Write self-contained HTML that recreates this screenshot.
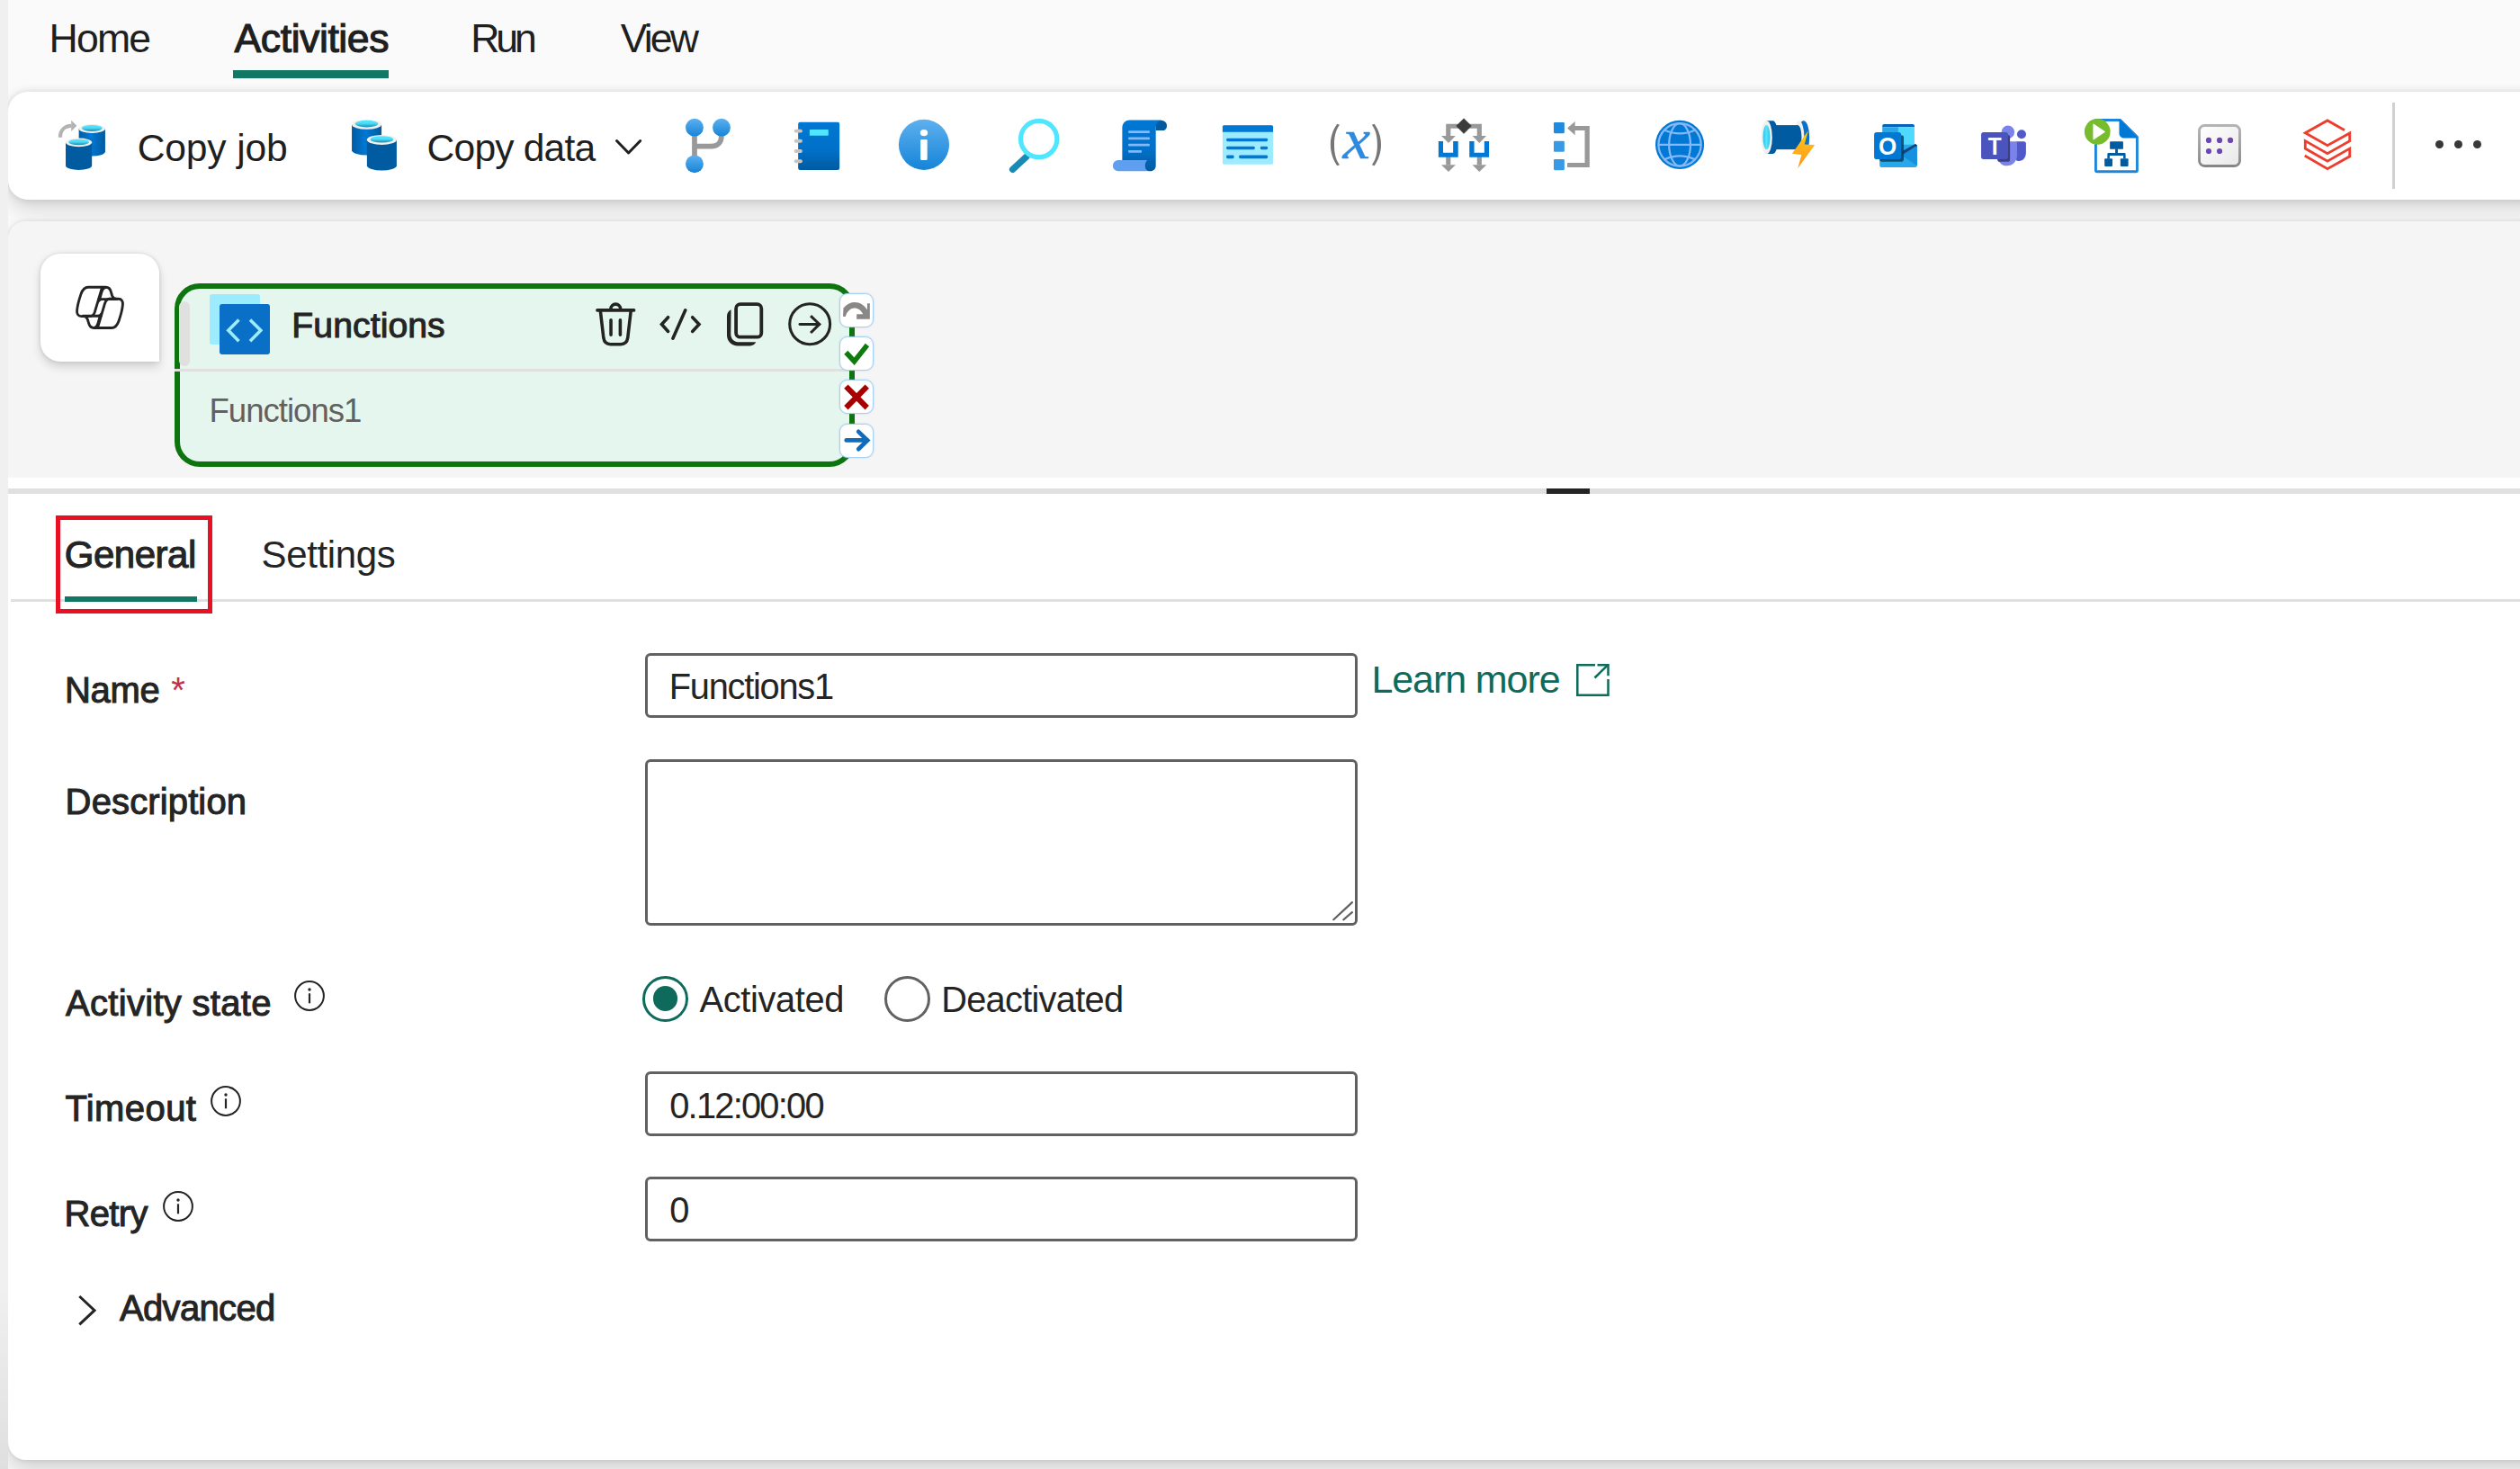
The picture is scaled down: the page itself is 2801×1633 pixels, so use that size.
<!DOCTYPE html>
<html lang="en">
<head>
<meta charset="utf-8">
<title>Functions activity - General</title>
<style>
html,body{margin:0;padding:0;}
body{width:2801px;height:1633px;overflow:hidden;background:#f0f0f0;font-family:"Liberation Sans",sans-serif;position:relative;}
.abs,.t,svg.i{position:absolute;}
.t{white-space:nowrap;}
#main{position:absolute;left:9px;top:0;width:2792px;height:1633px;background:#fafafa;overflow:hidden;}
#main > *{position:absolute;}
#toolbar{left:0;top:102px;width:2830px;height:120px;background:#fff;border-radius:22px;box-shadow:0 0 8px rgba(0,0,0,.13),0 11px 22px rgba(0,0,0,.14);}
#work{left:0;top:246px;width:2830px;height:1377px;background:#fff;border-radius:20px;box-shadow:0 0 5.5px rgba(0,0,0,.12),0 11px 22px rgba(0,0,0,.16);overflow:hidden;}
#canvas{position:absolute;left:0;top:0;width:100%;height:285px;background:#f5f5f5;}
.cb{width:38px;height:38px;box-sizing:border-box;border:1.5px solid #a6d1f3;border-radius:9px;background:#fff;box-shadow:0 0 2px rgba(120,180,235,.6);}
.inp{position:absolute;box-sizing:border-box;border:3px solid #616161;border-radius:6px;background:#fff;}
</style>
</head>
<body>

<div class="abs" id="leftshade" style="left:0;top:1430px;width:9px;height:203px;background:linear-gradient(to bottom,rgba(0,0,0,0),rgba(0,0,0,.07));"></div>
<div id="main">
  <div class="abs" style="left:250px;top:78px;width:173px;height:9px;background:#117865;"></div>
  <div id="toolbar"></div>
  <div id="work">
    <div id="canvas"></div>
    <div class="abs" style="left:0;top:297px;width:100%;height:6px;background:#e0e0e0;"></div>
    <div class="abs" style="left:1710px;top:297px;width:48px;height:6px;background:#242424;"></div>
    <div class="abs" style="left:3px;top:420px;width:100%;height:3px;background:#e0e0e0;"></div>
  </div>
</div>
<!-- toolbar divider + ellipsis -->
<div class="abs" style="left:2659px;top:114px;width:3px;height:96px;background:#d1d1d1;"></div>
<div class="abs" style="left:2706.8px;top:155.8px;width:9.2px;height:9.2px;border-radius:50%;background:#383838;"></div>
<div class="abs" style="left:2727.9px;top:155.8px;width:9.2px;height:9.2px;border-radius:50%;background:#383838;"></div>
<div class="abs" style="left:2748.9px;top:155.8px;width:9.2px;height:9.2px;border-radius:50%;background:#383838;"></div>
<!-- copilot button -->
<div class="abs" style="left:45px;top:282px;width:132px;height:120px;background:#fff;border-radius:22px 22px 0 22px;box-shadow:0 0 5.5px rgba(0,0,0,.12),0 5.5px 11px rgba(0,0,0,.14);"></div>
<!-- node -->
<div class="abs" style="left:194px;top:315px;width:756px;height:204px;box-sizing:border-box;border:6px solid #0e740f;border-radius:28px;background:#e5f6ee;"></div>
<div class="abs" style="left:194px;top:410px;width:750px;height:3px;background:#e0e0e0;"></div>
<div class="abs" style="left:199px;top:335px;width:12px;height:72px;border-radius:6px;background:#e0e0e0;"></div>
<!-- panel tab underline + red box -->
<div class="abs" style="left:72px;top:663px;width:147px;height:6px;background:#117865;"></div>
<div class="abs" style="left:62px;top:573px;width:174px;height:109px;box-sizing:border-box;border:5px solid #e81123;"></div>
<!-- inputs -->
<div class="inp" style="left:717px;top:726px;width:792px;height:72px;"></div>
<div class="inp" style="left:717px;top:843.5px;width:792px;height:185px;"></div>
<div class="inp" style="left:717px;top:1191px;width:792px;height:72px;"></div>
<div class="inp" style="left:717px;top:1308.4px;width:792px;height:72px;"></div>

<div class="t" style="left:54.53px;top:20.75px;font-size:44.6px;line-height:44.6px;font-weight:400;color:#1f1f1f;letter-spacing:-1.789px;">Home</div>
<div class="t" style="left:260.58px;top:20.75px;font-size:44.6px;line-height:44.6px;font-weight:400;color:#1f1f1f;letter-spacing:-0.451px;-webkit-text-stroke:1.16px #1f1f1f;">Activities</div>
<div class="t" style="left:523.23px;top:20.75px;font-size:44.6px;line-height:44.6px;font-weight:400;color:#1f1f1f;letter-spacing:-4.161px;">Run</div>
<div class="t" style="left:689.80px;top:20.75px;font-size:44.6px;line-height:44.6px;font-weight:400;color:#1f1f1f;letter-spacing:-2.897px;">View</div>
<div class="t" style="left:152.67px;top:142.64px;font-size:42.6px;line-height:42.6px;font-weight:400;color:#1f1f1f;letter-spacing:-0.150px;">Copy job</div>
<div class="t" style="left:474.57px;top:142.64px;font-size:42.6px;line-height:42.6px;font-weight:400;color:#1f1f1f;letter-spacing:-0.816px;">Copy data</div>
<div class="t" style="left:324.37px;top:341.82px;font-size:39.2px;line-height:39.2px;font-weight:400;color:#242424;letter-spacing:0.055px;-webkit-text-stroke:1.02px #242424;">Functions</div>
<div class="t" style="left:232.47px;top:438.82px;font-size:36.6px;line-height:36.6px;font-weight:400;color:#616161;letter-spacing:-1.002px;">Functions1</div>
<div class="t" style="left:71.74px;top:595.85px;font-size:42.0px;line-height:42.0px;font-weight:400;color:#242424;letter-spacing:-0.483px;-webkit-text-stroke:1.09px #242424;">General</div>
<div class="t" style="left:290.51px;top:595.85px;font-size:42.0px;line-height:42.0px;font-weight:400;color:#242424;letter-spacing:-0.343px;">Settings</div>
<div class="t" style="left:72.02px;top:747.24px;font-size:40.0px;line-height:40.0px;font-weight:400;color:#242424;letter-spacing:-0.364px;-webkit-text-stroke:1.04px #242424;">Name</div>
<div class="t" style="left:190.20px;top:747.24px;font-size:40.0px;line-height:40.0px;font-weight:400;color:#c4314b;letter-spacing:0.000px;">*</div>
<div class="t" style="left:72.62px;top:870.64px;font-size:40.0px;line-height:40.0px;font-weight:400;color:#242424;letter-spacing:0.133px;-webkit-text-stroke:1.04px #242424;">Description</div>
<div class="t" style="left:73.02px;top:1095.14px;font-size:40.0px;line-height:40.0px;font-weight:400;color:#242424;letter-spacing:0.300px;-webkit-text-stroke:1.04px #242424;">Activity state</div>
<div class="t" style="left:72.42px;top:1212.04px;font-size:40.0px;line-height:40.0px;font-weight:400;color:#242424;letter-spacing:0.428px;-webkit-text-stroke:1.04px #242424;">Timeout</div>
<div class="t" style="left:71.52px;top:1328.84px;font-size:40.0px;line-height:40.0px;font-weight:400;color:#242424;letter-spacing:-0.652px;-webkit-text-stroke:1.04px #242424;">Retry</div>
<div class="t" style="left:133.02px;top:1434.34px;font-size:40.0px;line-height:40.0px;font-weight:400;color:#242424;letter-spacing:-0.672px;-webkit-text-stroke:1.04px #242424;">Advanced</div>
<div class="t" style="left:743.82px;top:744.31px;font-size:39.8px;line-height:39.8px;font-weight:400;color:#242424;letter-spacing:-1.274px;">Functions1</div>
<div class="t" style="left:1524.46px;top:733.60px;font-size:43.0px;line-height:43.0px;font-weight:400;color:#0e6b5b;letter-spacing:-1.087px;">Learn more</div>
<div class="t" style="left:777.60px;top:1091.91px;font-size:39.8px;line-height:39.8px;font-weight:400;color:#242424;letter-spacing:-0.372px;">Activated</div>
<div class="t" style="left:1046.22px;top:1091.91px;font-size:39.8px;line-height:39.8px;font-weight:400;color:#242424;letter-spacing:-0.736px;">Deactivated</div>
<div class="t" style="left:744.21px;top:1209.61px;font-size:39.8px;line-height:39.8px;font-weight:400;color:#242424;letter-spacing:-1.754px;">0.12:00:00</div>
<div class="t" style="left:744.21px;top:1326.31px;font-size:39.8px;line-height:39.8px;font-weight:400;color:#242424;letter-spacing:0.000px;">0</div>
<!-- copilot icon -->
<svg class="i" style="left:70px;top:305px" width="80" height="75" viewBox="0 0 1567 1469" fill="none" stroke="#242424" stroke-width="56" stroke-linecap="round" stroke-linejoin="round">
  <g>
    <path d="M590 912H400C330 912 300 860 305 790C312 700 360 520 392 428C424 338 472 280 548 280H930C1000 280 1030 320 1045 380L1070 465C1085 512 1120 536 1168 538"/>
    <path d="M852 284L692 820C672 880 642 912 590 912"/>
    <path d="M926 284C880 290 858 330 845 375L800 532"/>
    <path d="M778 540H1170"/>
    <path d="M785 560L852 566C815 570 796 590 780 624Z" fill="#242424" stroke="none"/>
  </g>
  <g transform="rotate(180 803 723)">
    <path d="M590 912H400C330 912 300 860 305 790C312 700 360 520 392 428C424 338 472 280 548 280H930C1000 280 1030 320 1045 380L1070 465C1085 512 1120 536 1168 538"/>
    <path d="M852 284L692 820C672 880 642 912 590 912"/>
    <path d="M926 284C880 290 858 330 845 375L800 532"/>
    <path d="M778 540H1170"/>
    <path d="M785 560L852 566C815 570 796 590 780 624Z" fill="#242424" stroke="none"/>
  </g>
</svg>

<!-- node: function icon -->
<div class="abs" style="left:233px;top:327px;width:56px;height:56px;border-radius:3px;background:#9cebff;"></div>
<div class="abs" style="left:244px;top:338px;width:56px;height:56px;border-radius:3px;background:#0a6fc6;"></div>
<svg class="i" style="left:244px;top:338px" width="56" height="56" viewBox="0 0 56 56" fill="none" stroke="#9cebff" stroke-width="3.6" stroke-linecap="butt" stroke-linejoin="miter">
  <path d="M21.5 17.5L9.8 29.3L21.5 41.2"/><path d="M34 17.5L45.8 29.3L34 41.2"/>
</svg>
<!-- node: trash + code -->
<svg class="i" style="left:650px;top:325px" width="150" height="70" viewBox="0 0 2520 1176" fill="none" stroke="#242424" stroke-width="60" stroke-linecap="round" stroke-linejoin="round">
  <path d="M234 334H918"/>
  <path d="M485 312A91 91 0 0 1 667 312"/>
  <path d="M292 350L350 850C362 930 400 970 480 970H672C752 970 790 930 802 850L860 350"/>
  <path d="M488 518V795M662 518V795"/>
  <g stroke-linejoin="miter">
  <path d="M1556 466L1436 596L1556 730"/>
  <path d="M1878 332L1645 860"/>
  <path d="M2010 466L2134 596L2010 730"/>
  </g>
</svg>
<!-- node: copy + arrow circle -->
<svg class="i" style="left:795px;top:325px" width="150" height="70" viewBox="0 0 2520 1176" fill="none" stroke="#242424" stroke-width="64" stroke-linecap="butt" stroke-linejoin="miter">
  <rect x="388" y="221" width="474" height="614" rx="80" ry="80"/>
  <path stroke="none" fill="#242424" d="M295 322C245 345 218 390 218 445V800C218 915 305 1000 420 1000H650C700 1000 740 970 760 930H450C355 930 290 870 290 775Z"/>
  <circle cx="1767" cy="592" r="377" stroke-width="52"/>
  <path d="M1580 595H1945" stroke-width="50" stroke-linecap="round"/>
  <path d="M1782 438L1945 595L1782 757" stroke-width="50"/>
</svg>

<!-- node connectors -->
<div class="abs cb" style="left:933px;top:326.4px;"></div>
<div class="abs cb" style="left:933px;top:374.3px;"></div>
<div class="abs cb" style="left:933px;top:422.4px;"></div>
<div class="abs cb" style="left:933px;top:470.5px;"></div>
<svg class="i" style="left:920px;top:315px" width="70" height="105" viewBox="0 0 979 1469" fill="none">
  <path fill="#8a8886" d="M238 515L244 385C300 322 360 295 420 295C500 295 570 340 615 412L615 310L655 310L655 555L450 555L450 480L548 480C522 420 472 385 415 385C360 385 300 430 277 518Z"/>
  <path stroke="#0f7b0f" stroke-width="78" d="M284 1074L413 1213L615 958"/>
</svg>
<svg class="i" style="left:920px;top:415px" width="70" height="105" viewBox="0 0 979 1469" fill="none">
  <path stroke="#a80000" stroke-width="86" d="M285 205L612 535M612 205L285 535"/>
  <path stroke="#0f6cbd" stroke-width="66" stroke-linecap="round" d="M290 1042H610"/>
  <path stroke="#0f6cbd" stroke-width="66" stroke-linecap="round" stroke-linejoin="miter" d="M478 907L618 1042L478 1178"/>
</svg>

<!-- toolbar: copy job icon -->
<svg class="i" style="left:55px;top:125px" width="80" height="70" viewBox="0 0 1679 1469" fill="none">
  <defs>
    <linearGradient id="cylg" x1="0" x2="1" y1="0" y2="0"><stop offset="0" stop-color="#005ba1"/><stop offset=".45" stop-color="#0078d4"/><stop offset="1" stop-color="#005ba1"/></linearGradient>
    <linearGradient id="cylw" x1="0" x2="0" y1="0" y2="1"><stop offset="0" stop-color="#50e6ff"/><stop offset=".45" stop-color="#4ddcf7"/><stop offset="1" stop-color="#1b86b0"/></linearGradient>
  </defs>
  <path d="M250 582C250 420 350 315 515 312" stroke="#b3b3b3" stroke-width="88"/>
  <path d="M508 185L638 312L508 440Z" fill="#b3b3b3"/>
  <path d="M685 378V920A308 105 0 0 0 1300 920V378Z" fill="url(#cylg)"/>
  <ellipse cx="992" cy="378" rx="308" ry="105" fill="#f2f0ee"/>
  <ellipse cx="992" cy="368" rx="240" ry="72" fill="url(#cylw)"/>
  <path d="M378 700V1240A306 104 0 0 0 990 1240V700Z" fill="#005ba1"/>
  <ellipse cx="684" cy="700" rx="306" ry="102" fill="#f2f0ee"/>
  <ellipse cx="684" cy="692" rx="240" ry="70" fill="url(#cylw)"/>
</svg>

<!-- toolbar: copy data icon + chevron -->
<svg class="i" style="left:380px;top:125px" width="80" height="70" viewBox="0 0 1679 1469" fill="none">
  <path d="M232 278V885A347 118 0 0 0 925 885V278Z" fill="url(#cylg)"/>
  <ellipse cx="578" cy="278" rx="347" ry="118" fill="#f2f0ee"/>
  <ellipse cx="578" cy="264" rx="270" ry="80" fill="url(#cylw)"/>
  <path d="M585 640V1245A347 116 0 0 0 1278 1245V640Z" fill="#005ba1"/>
  <ellipse cx="931" cy="640" rx="347" ry="115" fill="#f2f0ee"/>
  <ellipse cx="931" cy="627" rx="268" ry="78" fill="url(#cylw)"/>
</svg>
<svg class="i" style="left:680px;top:150px" width="38" height="26" viewBox="0 0 38 26" fill="none" stroke="#1f1f1f" stroke-width="3" stroke-linecap="round" stroke-linejoin="round">
  <path d="M5.5 6.5L18.6 20L31.7 6.5"/>
</svg>

<!-- toolbar: branch + notebook -->
<svg class="i" style="left:750px;top:125px" width="200" height="75" viewBox="0 0 2520 945" fill="none">
  <defs>
    <linearGradient id="bcg" x1="0" x2="0" y1="0" y2="1"><stop offset="0" stop-color="#5eb0ef"/><stop offset="1" stop-color="#1584d8"/></linearGradient>
    <linearGradient id="nbg" x1="0" x2="0" y1="0" y2="1"><stop offset="0" stop-color="#0078d4"/><stop offset=".6" stop-color="#0070c8"/><stop offset="1" stop-color="#005ba1"/></linearGradient>
  </defs>
  <path d="M277 320V620M655 320C655 420 600 475 510 475H277" stroke="#999" stroke-width="72"/>
  <circle cx="277" cy="210" r="125" fill="url(#bcg)"/>
  <circle cx="655" cy="210" r="125" fill="url(#bcg)"/>
  <circle cx="277" cy="722" r="125" fill="url(#bcg)"/>
  <rect x="1728" y="135" width="580" height="670" rx="28" fill="url(#nbg)"/>
  <rect x="1888" y="238" width="264" height="88" rx="12" fill="#50e6ff"/>
  <g fill="#c8c6c4"><rect x="1672" y="235" width="116" height="50" rx="25"/><rect x="1672" y="375" width="116" height="50" rx="25"/><rect x="1672" y="517" width="116" height="50" rx="25"/><rect x="1672" y="658" width="116" height="50" rx="25"/></g>
</svg>

<!-- toolbar: info + search -->
<svg class="i" style="left:990px;top:125px" width="200" height="75" viewBox="0 0 2520 945" fill="none">
  <circle cx="466" cy="452" r="354" fill="url(#bcg)"/>
  <ellipse cx="466" cy="285" rx="53" ry="47" fill="#fff"/>
  <rect x="418" y="378" width="95" height="290" rx="16" fill="#fff"/>
  <path d="M1905 615L1708 798" stroke="#198ab3" stroke-width="92" stroke-linecap="round"/>
  <circle cx="2075" cy="372" r="254" stroke="#50e6ff" stroke-width="66" fill="#fff"/>
</svg>

<!-- toolbar: script + list -->
<svg class="i" style="left:1220px;top:125px" width="200" height="75" viewBox="0 0 2520 945" fill="none">
  <path d="M345 700V215C345 150 395 108 450 108H900L815 200V745C815 790 780 822 735 822C690 822 640 790 640 745V700Z" fill="url(#nbg)"/>
  <path d="M815 252V195C815 150 850 112 895 112C940 112 970 145 970 185C970 225 945 252 915 252Z" fill="#005ba1"/>
  <path d="M290 668H695C675 690 665 715 665 745C665 785 685 810 705 822H290A77 77 0 0 1 290 668Z" fill="#5ea0ef"/>
  <g fill="#83b9f9"><rect x="430" y="254" width="300" height="36" rx="10"/><rect x="430" y="345" width="300" height="36" rx="10"/><rect x="430" y="437" width="300" height="36" rx="10"/><rect x="430" y="528" width="188" height="36" rx="10"/></g>
  <rect x="1750" y="178" width="708" height="550" rx="22" fill="#9cebff"/>
  <path d="M1750 275V200A22 22 0 0 1 1772 178H2436A22 22 0 0 1 2458 200V275Z" fill="#0078d4"/>
  <g fill="#0078d4"><rect x="1803" y="362" width="580" height="45" rx="18"/><rect x="1803" y="475" width="400" height="45" rx="18"/><rect x="2278" y="475" width="105" height="45" rx="18"/><rect x="1803" y="600" width="107" height="45" rx="18"/><rect x="1980" y="600" width="403" height="45" rx="18"/></g>
</svg>

<!-- toolbar: variable (x) + if condition -->
<svg class="i" style="left:1460px;top:125px" width="200" height="75" viewBox="0 0 2520 945" fill="none">
  <defs><linearGradient id="xg" x1="0" x2="0" y1="0" y2="1"><stop offset="0" stop-color="#5ea0ef"/><stop offset="1" stop-color="#0078d4"/></linearGradient></defs>
  <path d="M330 162L365 172C300 260 290 360 290 452C290 545 300 650 365 735L330 745C270 660 238 560 238 452C238 345 270 250 330 162Z" fill="#767676"/>
  <path d="M330 162L365 172C300 260 290 360 290 452C290 545 300 650 365 735L330 745C270 660 238 560 238 452C238 345 270 250 330 162Z" fill="#767676" transform="translate(1183 0) scale(-1 1)"/>
  <text transform="translate(409 645) scale(1.08 1)" font-family="'Liberation Serif',serif" font-style="italic" font-size="805" fill="#2e8ae0" stroke="#2e8ae0" stroke-width="5">x</text>
  <g fill="#999">
    <path d="M1855 160H2355V330H2290V225H1920V330H1855Z"/>
    <path d="M1790 328H1990L1890 428ZM2225 328H2420L2322 428Z"/>
    <rect x="1855" y="620" width="65" height="116"/><rect x="2290" y="620" width="65" height="116"/>
    <path d="M1790 733H1990L1890 833ZM2225 733H2422L2322 833Z"/>
  </g>
  <path d="M2105 85L2210 190L2105 295L2000 190Z" fill="#3b3b3b" stroke="#3b3b3b" stroke-width="8" stroke-linejoin="round"/>
  <path d="M1750 403H1815V565H1955V403H2025V628H1750ZM2183 403H2250V565H2392V403H2458V628H2183Z" fill="#0078d4"/>
</svg>

<!-- toolbar: foreach + web globe -->
<svg class="i" style="left:1700px;top:125px" width="200" height="75" viewBox="0 0 2520 945" fill="none">
  <rect x="340" y="140" width="150" height="152" rx="14" fill="#1f8ade"/>
  <rect x="340" y="400" width="150" height="152" rx="14" fill="#389ae5"/>
  <rect x="340" y="655" width="150" height="153" rx="14" fill="#389ae5"/>
  <path d="M530 220L638 125V188H842V768H530V705H775V252H638V318Z" fill="#999"/>
  <circle cx="2105" cy="452" r="341" fill="#0078d4"/>
  <g stroke="#83b9f9" stroke-width="28">
    <circle cx="2105" cy="452" r="298"/>
    <ellipse cx="2105" cy="452" rx="150" ry="298"/>
    <path d="M1807 452H2403M1888 245Q2105 345 2322 245M1888 660Q2105 560 2322 660"/>
  </g>
</svg>

<!-- toolbar: pipeline-trigger + outlook -->
<svg class="i" style="left:1940px;top:125px" width="200" height="75" viewBox="0 0 2520 945" fill="none">
  <defs>
    <linearGradient id="ltg" x1="0" x2="0" y1="0" y2="1"><stop offset="0" stop-color="#ffd400"/><stop offset=".45" stop-color="#ffb01c"/><stop offset="1" stop-color="#fa9a1b"/></linearGradient>
    <linearGradient id="pcy" x1="0" x2="1" y1="0" y2="0"><stop offset="0" stop-color="#32bedd"/><stop offset=".5" stop-color="#50e6ff"/><stop offset="1" stop-color="#32bedd"/></linearGradient>
  </defs>
  <ellipse cx="815" cy="348" rx="82" ry="232" fill="#0a70c8"/>
  <ellipse cx="752" cy="348" rx="72" ry="230" fill="#f2f0ee"/>
  <ellipse cx="735" cy="348" rx="52" ry="170" fill="#005ba1"/>
  <rect x="298" y="178" width="437" height="340" fill="#005ba1"/>
  <path d="M300 115H385C410 115 425 150 434 180V520C425 550 410 580 385 580H300Z" fill="#005ba1"/>
  <ellipse cx="298" cy="348" rx="78" ry="233" fill="#f2f0ee"/>
  <ellipse cx="296" cy="348" rx="50" ry="172" fill="url(#pcy)"/>
  <path d="M880 255L655 576L786 592L733 783L972 455L828 447Z" fill="url(#ltg)"/>
  <!-- outlook -->
  <path d="M1918 205V190A25 25 0 0 1 1943 165H2343A25 25 0 0 1 2368 190V205Z" fill="#0364b8"/>
  <rect x="1918" y="205" width="224" height="250" fill="#28a8ea"/>
  <rect x="2140" y="205" width="228" height="250" fill="#50d9ff"/>
  <path d="M1880 450H2368L2405 462V740A28 28 0 0 1 2377 768H1908A28 28 0 0 1 1880 740Z" fill="#28a8ea"/>
  <path d="M2405 462L2185 600L2405 748Z" fill="#1490df"/>
  <path d="M2180 552L2380 440L2405 462L2200 592Z" fill="#14447d"/>
  <path d="M2372 436L2405 462L2385 475Z" fill="#0a2767"/>
  <rect x="1880" y="318" width="338" height="372" rx="34" fill="#0b3f5e" opacity=".85"/>
  <rect x="1803" y="278" width="378" height="378" rx="36" fill="#0078d4"/>
  <text x="1992" y="594" text-anchor="middle" font-family="'Liberation Sans',sans-serif" font-weight="700" font-size="352" fill="#fff" transform="translate(1992 0) scale(.93 1) translate(-1992 0)">O</text>
</svg>

<!-- toolbar: teams + invoke pipeline -->
<svg class="i" style="left:2190px;top:125px" width="200" height="75" viewBox="0 0 2520 945" fill="none">
  <circle cx="718" cy="305" r="63" fill="#5059c9"/>
  <path d="M640 405H750A30 30 0 0 1 780 435V560C780 630 740 680 682 680C662 680 650 676 640 668Z" fill="#5059c9"/>
  <circle cx="528" cy="275" r="91" fill="#7b83eb"/>
  <path d="M380 405H655V600C655 690 590 748 515 748C440 748 380 690 380 610Z" fill="#7b83eb"/>
  <rect x="380" y="315" width="176" height="375" rx="32" fill="#3d4080"/>
  <rect x="152" y="278" width="377" height="377" rx="34" fill="#4b53bc"/>
  <text x="344" y="590" text-anchor="middle" font-family="'Liberation Sans',sans-serif" font-weight="700" font-size="341" fill="#fff" transform="translate(344 0) scale(.9 1) translate(-344 0)">T</text>
  <!-- invoke pipeline -->
  <path d="M1757 107H2100L2337 345V810A18 18 0 0 1 2319 828H1775A18 18 0 0 1 1757 810Z" fill="#fff" stroke="#1b86dc" stroke-width="36" stroke-linejoin="round"/>
  <path d="M2085 100V290C2085 335 2115 360 2160 360H2345L2100 100Z" fill="#0078d4"/>
  <circle cx="1780" cy="270" r="181" fill="#76bc2d"/>
  <path d="M1726 166V376L1880 271Z" fill="#fff" stroke="#fff" stroke-width="14" stroke-linejoin="round"/>
  <g fill="#005ba1">
    <rect x="1955" y="405" width="186" height="110" rx="12"/>
    <rect x="2030" y="510" width="36" height="66"/>
    <path d="M1920 650V583A15 15 0 0 1 1935 568H2160A15 15 0 0 1 2175 583V650H2143V604H1952V650Z"/>
    <rect x="1880" y="645" width="111" height="111" rx="12"/><rect x="2102" y="645" width="111" height="111" rx="12"/>
  </g>
</svg>

<!-- toolbar: semantic-model dots + databricks -->
<svg class="i" style="left:2430px;top:125px" width="200" height="75" viewBox="0 0 2520 945" fill="none">
  <defs>
    <linearGradient id="dqs" x1="0" x2="0" y1="0" y2="1"><stop offset="0" stop-color="#b4b4b4"/><stop offset="1" stop-color="#868686"/></linearGradient>
    <linearGradient id="dqf" x1="0" x2="1" y1="0" y2="1"><stop offset="0" stop-color="#ffffff"/><stop offset="1" stop-color="#e8e8e8"/></linearGradient>
  </defs>
  <rect x="183" y="183" width="567" height="567" rx="72" fill="url(#dqf)" stroke="url(#dqs)" stroke-width="36"/>
  <g fill="#6b48b0"><circle cx="315" cy="390" r="39"/><circle cx="467" cy="390" r="39"/><circle cx="618" cy="390" r="39"/><circle cx="315" cy="542" r="39"/><circle cx="467" cy="542" r="39"/></g>
  <path d="M2218 250L1978 112L1667 288L1978 462L2290 290V400L1978 575L1667 398V505L1978 682L2290 505V615L1978 790L1660 606" stroke="#ee3d2c" stroke-width="36" stroke-linejoin="miter"/>
</svg>

<!-- panel: info icons -->
<svg class="i" style="left:323.7px;top:1087px" width="40" height="40" viewBox="0 0 40 40" fill="none"><circle cx="20" cy="20" r="15.9" stroke="#242424" stroke-width="2"/><circle cx="20" cy="13" r="1.7" fill="#242424"/><path d="M20 17.3V28.3" stroke="#242424" stroke-width="2.2"/></svg>
<svg class="i" style="left:230.9px;top:1203.8px" width="40" height="40" viewBox="0 0 40 40" fill="none"><circle cx="20" cy="20" r="15.9" stroke="#242424" stroke-width="2"/><circle cx="20" cy="13" r="1.7" fill="#242424"/><path d="M20 17.3V28.3" stroke="#242424" stroke-width="2.2"/></svg>
<svg class="i" style="left:177.9px;top:1320.8px" width="40" height="40" viewBox="0 0 40 40" fill="none"><circle cx="20" cy="20" r="15.9" stroke="#242424" stroke-width="2"/><circle cx="20" cy="13" r="1.7" fill="#242424"/><path d="M20 17.3V28.3" stroke="#242424" stroke-width="2.2"/></svg>
<!-- radios -->
<div class="abs" style="left:713.9px;top:1084.7px;width:51px;height:51px;box-sizing:border-box;border:3px solid #0e6b5b;border-radius:50%;"></div>
<div class="abs" style="left:725.6px;top:1096.4px;width:27.6px;height:27.6px;border-radius:50%;background:#0e6b5b;"></div>
<div class="abs" style="left:982.9px;top:1084.7px;width:51px;height:51px;box-sizing:border-box;border:3px solid #616161;border-radius:50%;"></div>
<!-- open-in-new icon -->
<svg class="i" style="left:1745px;top:731px" width="50" height="50" viewBox="0 0 50 50" fill="none" stroke="#0e6b5b" stroke-width="2.5">
  <path d="M28 8.3H8.3V41.8H42.5V24"/>
  <path d="M27.5 22.5L41.5 8.8"/>
  <path d="M30.5 8.3H42.5V20.3"/>
</svg>
<!-- textarea grip -->
<svg class="i" style="left:1475px;top:997px" width="32" height="30" viewBox="0 0 32 30" fill="none" stroke="#616161" stroke-width="2.2" stroke-linecap="round"><path d="M7.3 25.3L27.9 6.1M18.3 25.3L27.9 17.1"/></svg>
<!-- advanced chevron -->
<svg class="i" style="left:80px;top:1435px" width="34" height="44" viewBox="0 0 34 44" fill="none" stroke="#242424" stroke-width="3" stroke-linecap="butt" stroke-linejoin="miter"><path d="M8.3 6L25 21.7L8.3 37.4"/></svg>

</body>
</html>
